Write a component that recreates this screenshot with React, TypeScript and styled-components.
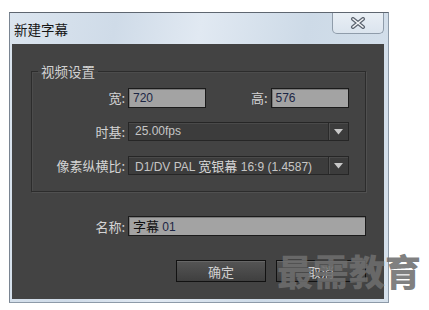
import styled, { createGlobalStyle } from 'styled-components';

const GlobalStyle = createGlobalStyle`
  html, body {
    margin: 0;
    background: #ffffff;
  }
  body {
    font-family: 'Noto Sans CJK SC', 'Liberation Sans', sans-serif;
  }
`;

const CJK = `'Noto Sans CJK SC', 'Liberation Sans', sans-serif`;
const LATIN = `'Liberation Sans', 'Noto Sans CJK SC', sans-serif`;

function CloseIcon() {
  return (
    <svg width="16" height="12" viewBox="0 0 16 12">
      <path d="M3 2 L13 10 M13 2 L3 10" stroke="#5c6470" strokeWidth="4" strokeLinecap="round" />
      <path d="M3 2 L13 10 M13 2 L3 10" stroke="#f4f6f8" strokeWidth="1.6" strokeLinecap="round" />
    </svg>
  );
}

function Arrow() {
  return (
    <svg width="9" height="6" viewBox="0 0 9 6">
      <path d="M0 0 H9 L4.5 5.5 Z" fill="#c8c8c8" />
    </svg>
  );
}

function Dropdown({ children }: { children: React.ReactNode }) {
  return (
    <Select>
      <SelectText>{children}</SelectText>
      <SelectArrow>
        <Arrow />
      </SelectArrow>
    </Select>
  );
}

export default function App() {
  return (
    <Page>
      <GlobalStyle />
      <Window>
        <TitleBar>
          <Title>新建字幕</Title>
          <CloseButton>
            <CloseIcon />
          </CloseButton>
        </TitleBar>
        <Panel>
          <Group>
            <Legend>视频设置</Legend>
            <Row>
              <Label>宽:</Label>
              <Input $width={78}>720</Input>
              <Label $width={65}>高:</Label>
              <Input $width={79}>576</Input>
            </Row>
            <Row>
              <Label>时基:</Label>
              <Dropdown>25.00fps</Dropdown>
            </Row>
            <Row>
              <Label>像素纵横比:</Label>
              <Dropdown>
                D1/DV PAL <Cjk>宽银幕</Cjk> 16:9 (1.4587)
              </Dropdown>
            </Row>
          </Group>
          <NameRow>
            <Label $width={97}>名称:</Label>
            <Input $width={238}>
              <Cjk $dark>字幕</Cjk> 01
            </Input>
          </NameRow>
          <Buttons>
            <Button>确定</Button>
            <Button>取消</Button>
          </Buttons>
        </Panel>
      </Window>
      <Watermark>最需教育</Watermark>
    </Page>
  );
}

const Page = styled.div`
  position: relative;
  width: 429px;
  height: 310px;
  padding: 12px 0 0 9px;
  box-sizing: border-box;
  overflow: hidden;
`;

const Window = styled.div`
  width: 380px;
  height: 291px;
  box-sizing: border-box;
  display: flex;
  flex-direction: column;
  padding: 0 4px 3px 2px;
  border: 1px solid #8d9aa8;
  border-top-color: #5e6670;
  border-left-color: #7a8592;
  background: linear-gradient(100deg, #dbe5ef 0%, #cfdbe8 25%, #e1e9f2 45%, #cddae7 70%, #d6e1ec 100%);
`;

const TitleBar = styled.div`
  height: 31px;
  display: flex;
  justify-content: space-between;
  align-items: flex-start;
`;

const Title = styled.div`
  padding: 8px 0 0 2px;
  font-family: ${CJK};
  font-size: 13.5px;
  line-height: 16px;
  color: #161616;
`;

const CloseButton = styled.div`
  width: 52px;
  height: 21px;
  box-sizing: border-box;
  display: flex;
  align-items: center;
  justify-content: center;
  border: 1px solid #8f9caa;
  border-top: none;
  border-radius: 0 0 5px 5px;
  background: linear-gradient(#e9eff5, #dbe4ee);
`;

const Panel = styled.div`
  flex: 1;
  background: #434343;
  padding: 18px 18px 0 19px;
  display: flex;
  flex-direction: column;
`;

const Group = styled.fieldset`
  margin: 0;
  padding: 8px 16px 16px 6px;
  border: 1px solid #2c2c2c;
  box-shadow: 1px 1px 0 #505050, inset 1px 1px 0 #4c4c4c;
  display: flex;
  flex-direction: column;
  gap: 15px;
  min-width: 0;
`;

const Legend = styled.legend`
  padding: 0 3px;
  font-family: ${CJK};
  font-size: 13.5px;
  line-height: 18px;
  color: #d2d2d2;
`;

const Row = styled.div`
  display: flex;
  align-items: center;
  height: 19px;
`;

const Label = styled.div<{ $width?: number }>`
  width: ${(p) => p.$width ?? 90}px;
  flex-shrink: 0;
  box-sizing: border-box;
  padding-right: 3px;
  text-align: right;
  font-family: ${CJK};
  font-size: 13px;
  line-height: 19px;
  color: #d4d4d4;
  white-space: nowrap;
`;

const Input = styled.div<{ $width: number }>`
  width: ${(p) => p.$width}px;
  height: 20px;
  box-sizing: border-box;
  padding-left: 4px;
  background: #a3a3a3;
  border: 1px solid #1b1b1b;
  box-shadow: inset 1px 1px 0 #7a7a7a;
  font-family: ${LATIN};
  font-size: 12px;
  line-height: 18px;
  color: #1c2644;
  white-space: nowrap;
`;

const Select = styled.div`
  width: 221px;
  height: 19px;
  box-sizing: border-box;
  display: flex;
  align-items: stretch;
  background: #3c3c3c;
  border: 1px solid #262626;
  box-shadow: inset 0 1px 0 #4a4a4a;
`;

const SelectText = styled.div`
  flex: 1;
  padding-left: 6px;
  font-family: ${LATIN};
  font-size: 12px;
  line-height: 17px;
  color: #c6c6c6;
  white-space: nowrap;
  overflow: hidden;
`;

const SelectArrow = styled.div`
  width: 19px;
  display: flex;
  align-items: center;
  justify-content: center;
  border-left: 1px solid #2a2a2a;
  box-shadow: inset 1px 0 0 #505050;
`;

const Cjk = styled.span<{ $dark?: boolean }>`
  font-family: ${CJK};
  font-size: 13px;
  color: ${(p) => (p.$dark ? '#111111' : '#d8d8d8')};
`;

const NameRow = styled(Row)`
  margin-top: 24px;
  height: 20px;
`;

const Buttons = styled.div`
  margin-top: 24px;
  display: flex;
  justify-content: flex-end;
  gap: 10px;
  padding-right: 0;
`;

const Button = styled.div`
  width: 90px;
  height: 22px;
  box-sizing: border-box;
  display: flex;
  align-items: center;
  justify-content: center;
  background: linear-gradient(#555555, #3f3f3f);
  border: 1px solid #121212;
  box-shadow: inset 0 1px 0 #666666;
  font-family: ${CJK};
  font-size: 13px;
  color: #d0d0d0;
`;

const Watermark = styled.div`
  position: absolute;
  left: 277px;
  top: 248px;
  font-family: ${CJK};
  font-size: 36px;
  font-weight: 900;
  line-height: 44px;
  color: rgba(110, 110, 110, 0.88);
  white-space: nowrap;
`;
